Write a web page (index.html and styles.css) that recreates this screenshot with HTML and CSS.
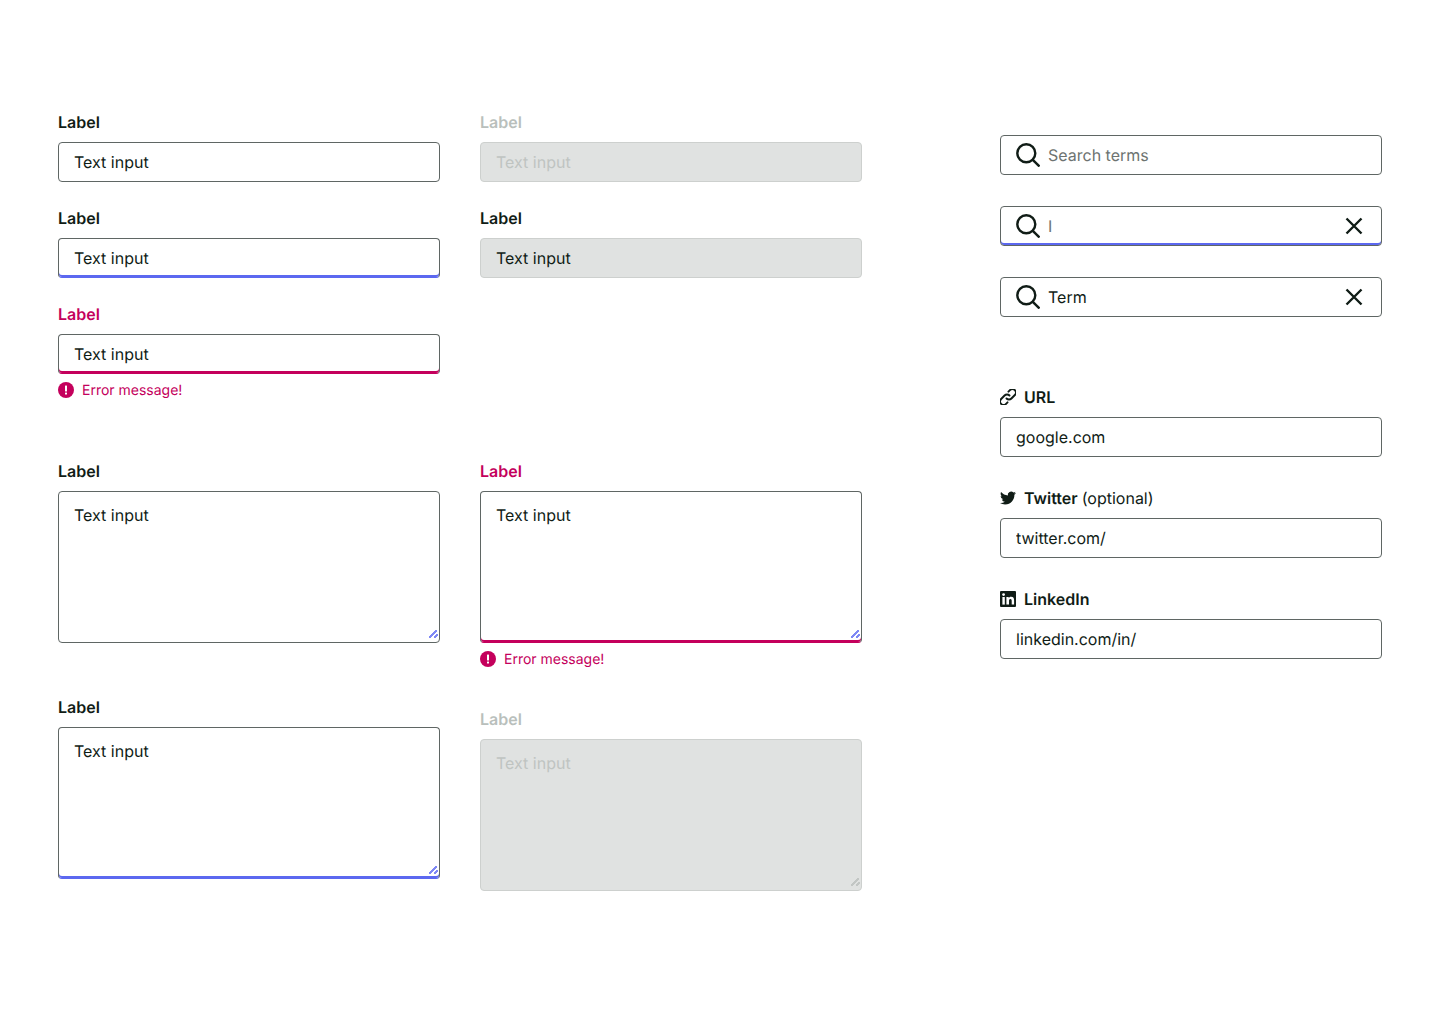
FILE: index.html
```html
<!DOCTYPE html>
<html lang="en">
<head>
<meta charset="utf-8">
<title>Text inputs</title>
<link rel="stylesheet" href="styles.css">
</head>
<body>
<main class="page">
  <section class="col col-a">
    <div class="field">
      <label class="label">Label</label>
      <input class="input" value="Text input">
    </div>
    <div class="field">
      <label class="label">Label</label>
      <input class="input is-focus" value="Text input">
    </div>
    <div class="field">
      <label class="label label-error">Label</label>
      <input class="input is-error" value="Text input">
      <p class="error-msg">
        <svg class="err-icon" viewBox="0 0 16 16"><circle cx="8" cy="8" r="8" fill="#c4005c"/><rect x="7" y="3.5" width="2" height="6" rx=".5" fill="#fff"/><rect x="7" y="10.5" width="2" height="2" rx=".5" fill="#fff"/></svg>
        <span class="error-text">Error message!</span>
      </p>
    </div>
    <div class="field gap-a1">
      <label class="label">Label</label>
      <textarea class="input area">Text input</textarea>
    </div>
    <div class="field gap-a2">
      <label class="label">Label</label>
      <textarea class="input area is-focus">Text input</textarea>
    </div>
  </section>

  <section class="col col-b">
    <div class="field">
      <label class="label label-disabled">Label</label>
      <input class="input is-disabled" value="Text input" disabled>
    </div>
    <div class="field">
      <label class="label">Label</label>
      <input class="input is-readonly" value="Text input" readonly>
    </div>
    <div class="field gap-b1">
      <label class="label label-error">Label</label>
      <textarea class="input area is-error">Text input</textarea>
      <p class="error-msg">
        <svg class="err-icon" viewBox="0 0 16 16"><circle cx="8" cy="8" r="8" fill="#c4005c"/><rect x="7" y="3.5" width="2" height="6" rx=".5" fill="#fff"/><rect x="7" y="10.5" width="2" height="2" rx=".5" fill="#fff"/></svg>
        <span class="error-text">Error message!</span>
      </p>
    </div>
    <div class="field gap-b2">
      <label class="label label-disabled">Label</label>
      <textarea class="input area is-disabled" disabled>Text input</textarea>
    </div>
  </section>

  <section class="col col-c">
    <div class="search-list">
      <div class="search">
        <svg class="search-icon" viewBox="0 0 24 24" fill="none" stroke="#101c16" stroke-width="2.4"><circle cx="10.3" cy="10.3" r="9"/><path d="M16.8 16.8l6.7 6.7"/></svg>
        <input class="search-input" placeholder="Search terms">
      </div>
      <div class="search is-focus">
        <svg class="search-icon" viewBox="0 0 24 24" fill="none" stroke="#101c16" stroke-width="2.4"><circle cx="10.3" cy="10.3" r="9"/><path d="M16.8 16.8l6.7 6.7"/></svg>
        <input class="search-input" placeholder="I">
        <svg class="clear-icon" viewBox="0 0 20 20" fill="none" stroke="#101c16" stroke-width="2.4"><path d="M2.5 2.5l15 15M17.5 2.5l-15 15"/></svg>
      </div>
      <div class="search">
        <svg class="search-icon" viewBox="0 0 24 24" fill="none" stroke="#101c16" stroke-width="2.4"><circle cx="10.3" cy="10.3" r="9"/><path d="M16.8 16.8l6.7 6.7"/></svg>
        <input class="search-input" value="Term">
        <svg class="clear-icon" viewBox="0 0 20 20" fill="none" stroke="#101c16" stroke-width="2.4"><path d="M2.5 2.5l15 15M17.5 2.5l-15 15"/></svg>
      </div>
    </div>
    <div class="social-list">
      <div class="field">
        <label class="label label-icon">
          <svg class="label-svg" viewBox="1 1 14 14" fill="none" stroke="#101c16" stroke-width="1.7" stroke-linecap="round"><path d="M6.7 9.3a3 3 0 0 0 4.3 0l3-3a3 3 0 0 0-4.3-4.3L8.4 3.3"/><path d="M9.3 6.7a3 3 0 0 0-4.3 0l-3 3A3 3 0 0 0 6.3 14l1.3-1.3"/></svg>
          URL
        </label>
        <input class="input" value="google.com">
      </div>
      <div class="field">
        <label class="label label-icon">
          <svg class="label-svg" viewBox="0 0 24 24" fill="#101c16"><path d="M23.95 4.57a10 10 0 0 1-2.82.77 4.96 4.96 0 0 0 2.16-2.72c-.95.55-2 .96-3.12 1.19a4.92 4.92 0 0 0-8.38 4.48C7.69 8.09 4.07 6.13 1.64 3.16a4.82 4.82 0 0 0-.67 2.48c0 1.71.87 3.21 2.19 4.09a4.9 4.9 0 0 1-2.23-.62v.06a4.92 4.92 0 0 0 3.95 4.83 5 5 0 0 1-2.21.08 4.94 4.94 0 0 0 4.6 3.42A9.87 9.87 0 0 1 0 19.54a14 14 0 0 0 7.56 2.21c9.05 0 14-7.5 14-13.98 0-.21 0-.42-.02-.63a9.94 9.94 0 0 0 2.41-2.57z"/></svg>
          <span><b class="strong">Twitter</b> <span class="optional">(optional)</span></span>
        </label>
        <input class="input" value="twitter.com/">
      </div>
      <div class="field">
        <label class="label label-icon">
          <svg class="label-svg" viewBox="0 0 16 16"><rect width="16" height="16" rx="1" fill="#101c16"/><rect x="2.4" y="6" width="2.4" height="7.6" fill="#fff"/><circle cx="3.6" cy="3.6" r="1.4" fill="#fff"/><path d="M6.4 6h2.3v1.05c.35-.65 1.2-1.25 2.4-1.25 2.5 0 3 1.6 3 3.7v4.1h-2.4V10c0-.9-.05-2-1.25-2S9 8.95 9 10v3.6H6.4z" fill="#fff"/></svg>
          LinkedIn
        </label>
        <input class="input" value="linkedin.com/in/">
      </div>
    </div>
  </section>
</main>
</body>
</html>
```
FILE: styles.css
```css
* { box-sizing: border-box; text-rendering: geometricPrecision; }

html, body { margin: 0; background: #fff; }

body {
  font-family: Inter, "Liberation Sans", sans-serif;
  color: #101c16;
  width: 1440px;
  height: 1024px;
  overflow: hidden;
}

.page {
  display: flex;
  padding: 112px 58px 0;
  align-items: flex-start;
}

.col { width: 382px; display: flex; flex-direction: column; }
.col-a, .col-b { gap: 26px; }
.col-b { margin-left: 40px; }
.col-c { margin-left: 138px; padding-top: 23px; gap: 70px; }

.field { display: flex; flex-direction: column; gap: 10px; }
.gap-a1 { margin-top: 36px; }
.gap-a2 { margin-top: 28px; }
.gap-b1 { margin-top: 157px; }
.gap-b2 { margin-top: 15px; }

.label {
  display: block;
  font-size: 16px;
  line-height: 20px;
  font-weight: 600;
  color: #101c16;
}
.label-error { color: #c4005c; }
.label-disabled { color: #b9bfbc; }

.label-icon { display: flex; align-items: center; gap: 8px; }
.label-svg { width: 16px; height: 16px; flex: none; }
.strong { font-weight: 600; }
.optional { font-weight: 400; }

.input {
  display: block;
  width: 100%;
  height: 40px;
  padding: 0 15px;
  border: 1px solid #5f6664;
  border-radius: 4px;
  background: #fff;
  color: #101c16;
  font: 400 16px/24px Inter, "Liberation Sans", sans-serif;
  outline: none;
}

.area {
  height: 152px;
  padding: 11px 15px;
  resize: both;
}

.area::-webkit-resizer {
  background-image:
    linear-gradient(135deg, transparent 43%, #7f88f5 43%, #7f88f5 57%, transparent 57%),
    linear-gradient(135deg, transparent 37%, #7f88f5 37%, #7f88f5 63%, transparent 63%);
  background-size: 8px 8px, 4px 4px;
  background-position: 5px 2.5px, 9.5px 7px;
  background-repeat: no-repeat;
}
.area.is-disabled::-webkit-resizer {
  background-image:
    linear-gradient(135deg, transparent 43%, #c2c6c4 43%, #c2c6c4 57%, transparent 57%),
    linear-gradient(135deg, transparent 37%, #c2c6c4 37%, #c2c6c4 63%, transparent 63%);
}

.is-focus { border-bottom-color: #5c68f0; box-shadow: inset 0 -2px 0 #5c68f0; }
.is-error { border-bottom-color: #c4005c; box-shadow: inset 0 -2px 0 #c4005c; }

.is-disabled {
  background: #e0e2e1;
  border-color: #cdd0ce;
  color: #bfc4c1;
  -webkit-text-fill-color: #bfc4c1;
  opacity: 1;
}
.is-readonly {
  background: #e0e2e1;
  border-color: #cdd0ce;
}

.error-msg {
  display: flex;
  align-items: center;
  gap: 8px;
  height: 18px;
  margin: -3px 0 0;
  font-size: 14px;
  line-height: 16px;
  color: #c4005c;
}
.error-text { margin-top: 2px; }
.err-icon { width: 16px; height: 16px; flex: none; }

.search-list { display: flex; flex-direction: column; gap: 31px; }
.social-list { display: flex; flex-direction: column; gap: 31px; }

.search {
  display: flex;
  align-items: center;
  height: 40px;
  padding: 0 17px 0 15px;
  border: 1px solid #5f6664;
  border-radius: 4px;
  background: #fff;
}
.search-icon { width: 24px; height: 24px; flex: none; }
.clear-icon { width: 20px; height: 20px; flex: none; }

.search-input {
  flex: 1;
  min-width: 0;
  height: 24px;
  margin-left: 8px;
  padding: 0;
  border: 0;
  background: transparent;
  color: #101c16;
  font: 400 16px/24px Inter, "Liberation Sans", sans-serif;
  outline: none;
}
.search-input::placeholder { color: #6d7371; opacity: 1; }
```
